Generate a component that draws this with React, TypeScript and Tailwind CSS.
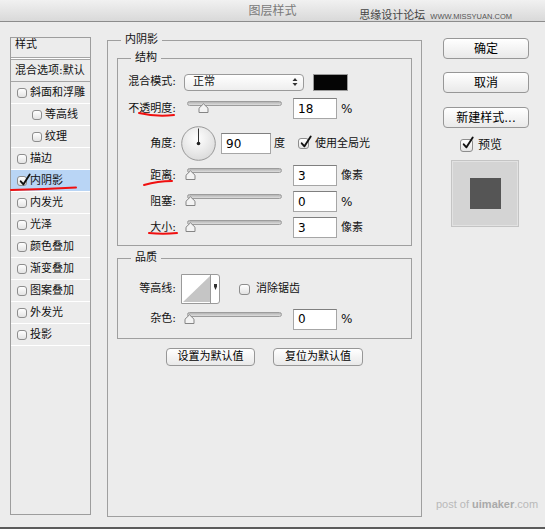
import React from 'react';

const sideItems: { t: string; sub?: boolean; on?: boolean }[] = [
  { t: '斜面和浮雕' },
  { t: '等高线', sub: true },
  { t: '纹理', sub: true },
  { t: '描边' },
  { t: '内阴影', on: true },
  { t: '内发光' },
  { t: '光泽' },
  { t: '颜色叠加' },
  { t: '渐变叠加' },
  { t: '图案叠加' },
  { t: '外发光' },
  { t: '投影' },
];

const Box: React.FC<{ checked?: boolean; className?: string }> = ({ checked, className = '' }) => (
  <span className={`relative shrink-0 rounded-[3px] border border-[#8d8d8d] bg-linear-to-b from-white to-[#e3e3e3] ${className}`}>
    {checked && (
      <svg className="absolute left-[1px] top-[-3px] overflow-visible" width="12" height="12" viewBox="0 0 14 14">
        <path d="M2 8.5 L5.2 12 L12.5 0.5" fill="none" stroke="#111" strokeWidth="2.2" strokeLinecap="round" strokeLinejoin="round" />
      </svg>
    )}
  </span>
);

const Slider: React.FC<{ thumb: string }> = ({ thumb }) => (
  <div className="relative ml-[11px] h-[21px] w-[95px] shrink-0">
    <div className="mt-[3px] h-[5px] rounded-full border border-[#9c9c9c] bg-linear-to-b from-[#b4b4b4] to-[#dedede]" />
    <svg className={`absolute top-[5px] ${thumb}`} width="11" height="10" viewBox="0 0 11 10">
      <path d="M1 9.5 V5.2 L5.5 0.8 L10 5.2 V9.5 Z" fill="#f3f3f3" stroke="#858585" />
    </svg>
  </div>
);

const Field: React.FC<{ v: string; className?: string }> = ({ v, className = 'ml-[11px] w-[44px]' }) => (
  <div className={`flex h-[21px] shrink-0 items-center border border-[#a6a6a6] border-t-[#7f7f7f] bg-white pl-[4px] font-['DejaVu_Sans',sans-serif] text-[12px] text-black ${className}`}>
    {v}
  </div>
);

const Label: React.FC<{ t: string }> = ({ t }) => <div className="w-[58px] shrink-0 text-right">{t}</div>;

const Btn: React.FC<{ t: string; className: string }> = ({ t, className }) => (
  <div className={`flex items-center justify-center rounded-[4px] border border-[#979797] bg-linear-to-b from-white to-[#e9e9e9] text-black ${className}`}>
    {t}
  </div>
);

export default function App() {
  return (
    <div className="relative flex h-[529px] w-[545px] flex-col overflow-hidden border-b-2 border-[#5b5b5b] bg-[#ececec] font-['DejaVu_Sans','Noto_Sans_CJK_SC',sans-serif] text-[11px] leading-[14px] text-[#111]">
      {/* title bar */}
      <div className="flex h-[22px] shrink-0 items-center justify-center border-b border-[#8c8c8c] bg-linear-to-b from-[#f1f1f1] to-[#d9d9d9] text-[12px] text-[#7a7a7a]">
        图层样式
      </div>

      <div className="flex h-[505px] items-start">
        {/* left list */}
        <div className="ml-[10px] mt-[15px] flex h-[478px] w-[81px] shrink-0 flex-col border border-[#9d9d9d]">
          <div className="h-[19px] pl-[4px]">样式</div>
          <div className="h-px bg-[#a5a5a5]" />
          <div className="h-px bg-white" />
          <div className="h-px bg-[#a5a5a5]" />
          <div className="flex h-[21px] items-center pl-[4px]">混合选项:默认</div>
          <div className="h-px bg-[#a5a5a5]" />
          {sideItems.map((it) => (
            <React.Fragment key={it.t}>
              <div className={`flex h-[21px] items-center ${it.on ? 'bg-[#b9d5f5]' : ''}`}>
                <Box checked={it.on} className={`${it.sub ? 'ml-[21px]' : 'ml-[6px]'} h-[10px] w-[10px]`} />
                <span className="ml-[3px]">{it.t}</span>
              </div>
              <div className="h-px bg-white" />
            </React.Fragment>
          ))}
        </div>

        {/* middle panel */}
        <div className="ml-[16px] mt-[18px] h-[477px] w-[315px] shrink-0 border border-[#9f9f9f]">
          <div className="-mt-[8px] ml-[13px] w-fit bg-[#ececec] px-[4px]">内阴影</div>

          <div className="ml-[9px] mt-[11px] h-[188px] w-[295px] border border-[#9f9f9f]">
            <div className="-mt-[8px] ml-[13px] w-fit bg-[#ececec] px-[4px]">结构</div>

            <div className="mt-[7px] flex h-[20px] items-center">
              <Label t="混合模式:" />
              <div className="ml-[8px] flex h-[17px] w-[120px] items-center justify-between rounded-[4px] border border-[#9a9a9a] bg-linear-to-b from-white to-[#eeeeee] pl-[8px] pr-[5px]">
                <span>正常</span>
                <svg width="6" height="10" viewBox="0 0 6 10">
                  <path d="M0.5 4 L3 1 L5.5 4 Z M0.5 6 L3 9 L5.5 6 Z" fill="#333" />
                </svg>
              </div>
              <div className="ml-[9px] h-[17px] w-[35px] border border-[#9a9a9a] bg-[#050505]" />
            </div>

            <div className="mt-[6px] flex h-[21px] items-center">
              <Label t="不透明度:" />
              <Slider thumb="left-[11px]" />
              <Field v="18" />
              <span className="ml-[4px] font-['DejaVu_Sans',sans-serif] text-[12px]">%</span>
            </div>

            <div className="mt-[7px] flex h-[35px] items-center">
              <Label t="角度:" />
              <svg className="ml-[5px] shrink-0" width="35" height="35" viewBox="0 0 35 35">
                <defs>
                  <radialGradient id="dial" cx="45%" cy="35%" r="70%">
                    <stop offset="0" stopColor="#ffffff" />
                    <stop offset="1" stopColor="#d9d9d9" />
                  </radialGradient>
                </defs>
                <circle cx="17.5" cy="17.5" r="16.8" fill="url(#dial)" stroke="#999" />
                <line x1="17.5" y1="17.5" x2="17.5" y2="2.5" stroke="#333" strokeWidth="1" />
                <circle cx="17.5" cy="17.5" r="1.8" fill="#222" />
              </svg>
              <Field v="90" className="ml-[5px] w-[50px]" />
              <span className="ml-[3px]">度</span>
              <Box checked className="ml-[13px] h-[11px] w-[11px]" />
              <span className="ml-[6px]">使用全局光</span>
            </div>

            <div className="mt-[4px] flex h-[21px] items-center">
              <Label t="距离:" />
              <Slider thumb="left-[-2px]" />
              <Field v="3" />
              <span className="ml-[4px]">像素</span>
            </div>

            <div className="mt-[5px] flex h-[21px] items-center">
              <Label t="阻塞:" />
              <Slider thumb="left-[-2px]" />
              <Field v="0" />
              <span className="ml-[4px] font-['DejaVu_Sans',sans-serif] text-[12px]">%</span>
            </div>

            <div className="mt-[5px] flex h-[21px] items-center">
              <Label t="大小:" />
              <Slider thumb="left-[-2px]" />
              <Field v="3" />
              <span className="ml-[4px]">像素</span>
            </div>
          </div>

          <div className="ml-[9px] mt-[12px] h-[81px] w-[295px] border border-[#9f9f9f]">
            <div className="-mt-[8px] ml-[13px] w-fit bg-[#ececec] px-[4px]">品质</div>

            <div className="mt-[9px] flex h-[30px] items-center">
              <Label t="等高线:" />
              <div className="ml-[5px] flex h-[30px] w-[39px] shrink-0 rounded-r-[3px] border border-[#9a9a9a] bg-white">
                <div className="h-full w-[29px] border-r border-[#9a9a9a] p-[1px]">
                  <svg width="27" height="26" viewBox="0 0 27 26" preserveAspectRatio="none">
                    <path d="M0 26 L27 0 L27 26 Z" fill="#c5c5c5" />
                  </svg>
                </div>
                <div className="flex flex-1 justify-center pt-[9px]">
                  <svg width="3" height="6" viewBox="0 0 3 6">
                    <path d="M0 0 H3 V2.5 L1.5 6 L0 2.5 Z" fill="#333" />
                  </svg>
                </div>
              </div>
              <Box className="ml-[19px] h-[11px] w-[11px]" />
              <span className="ml-[6px]">消除锯齿</span>
            </div>

            <div className="mt-[5px] flex h-[20px] items-center">
              <Label t="杂色:" />
              <Slider thumb="left-[-3px]" />
              <Field v="0" className="ml-[11px] h-[20px] w-[44px]" />
              <span className="ml-[4px] font-['DejaVu_Sans',sans-serif] text-[12px]">%</span>
            </div>
          </div>

          <div className="mt-[9px] flex justify-center gap-[18px]">
            <Btn t="设置为默认值" className="h-[18px] w-[89px]" />
            <Btn t="复位为默认值" className="h-[18px] w-[90px]" />
          </div>
        </div>

        {/* right column */}
        <div className="ml-[21px] mt-[16px] flex w-[86px] shrink-0 flex-col text-[12px]">
          <Btn t="确定" className="h-[21px] w-[86px]" />
          <Btn t="取消" className="mt-[13px] h-[21px] w-[86px]" />
          <Btn t="新建样式..." className="mt-[14px] h-[21px] w-[86px]" />
          <div className="ml-[17px] mt-[10px] flex h-[14px] items-center">
            <Box checked className="h-[13px] w-[13px]" />
            <span className="ml-[5px]">预览</span>
          </div>
          <div className="ml-[9px] mt-[9px] flex h-[65px] w-[66px] items-center justify-center border border-[#e2e2e2] bg-[#d4d4d4] outline outline-[#c4c4c4]">
            <div className="h-[31px] w-[31px] bg-[#555555]" />
          </div>
        </div>
      </div>

      {/* watermarks */}
      <div className="absolute right-[33px] top-[9px] flex items-end gap-[5px]">
        <span className="text-[11px] text-[#444]">思缘设计论坛</span>
        <span className="font-['Liberation_Sans',sans-serif] text-[7.5px] leading-[12px] text-[#555]">WWW.MISSYUAN.COM</span>
      </div>
      <div className="absolute left-[436px] top-[497px] font-['Liberation_Sans',sans-serif] text-[11px] text-[#b9b9b9]">
        post of <b className="text-[#aaaaaa]">uimaker</b>.com
      </div>

      {/* red annotation strokes */}
      <svg className="pointer-events-none absolute left-0 top-0" width="545" height="529" viewBox="0 0 545 529">
        <g fill="none" stroke="#f01010" strokeWidth="2" strokeLinecap="round">
          <path d="M11 190 Q45 189 76 187.5" />
          <path d="M139 113 Q156 117 174 115" />
          <path d="M144 185 Q158 181 172 181" />
          <path d="M149 233 Q163 234.5 177 233" />
        </g>
      </svg>
    </div>
  );
}
